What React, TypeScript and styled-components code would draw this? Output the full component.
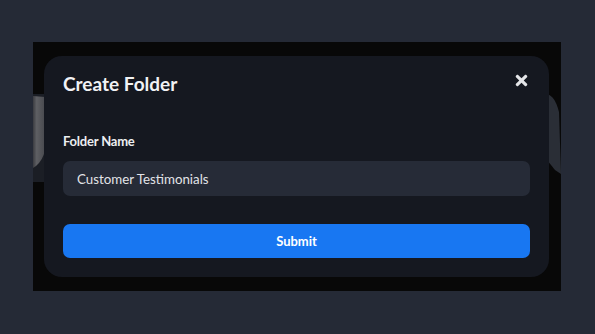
import styled, { createGlobalStyle } from 'styled-components';
import { FaTimes } from 'react-icons/fa';

const GlobalStyle = createGlobalStyle`
  html, body {
    margin: 0;
    padding: 0;
    background: #252a36;
    font-family: Lato, "Open Sans", sans-serif;
  }
`;

const Page = styled.div`
  height: 334px;
  padding: 42px 0 0 33px;
  box-sizing: border-box;
`;

const VideoFrame = styled.div`
  position: relative;
  width: 528px;
  height: 249px;
  padding: 14px 12px 14px 11px;
  box-sizing: border-box;
  background: #080808;
  overflow: hidden;
`;

const Thumbnail = styled.svg`
  position: absolute;
  inset: 0;
  width: 100%;
  height: 100%;
`;

const Modal = styled.div`
  position: relative;
  height: 221px;
  border-radius: 18px;
  background: #151820;
  padding: 15px 19px 0 19px;
  box-sizing: border-box;
  display: flex;
  flex-direction: column;
`;

const Header = styled.div`
  display: flex;
  align-items: center;
  justify-content: space-between;
  height: 24px;
`;

const Title = styled.h2`
  margin: 0;
  color: #f1f2f4;
  font-size: 19px;
  font-weight: 700;
`;

const CloseButton = styled.button`
  border: 0;
  background: none;
  padding: 0;
  margin-top: -6px;
  color: #e4e5e8;
  display: flex;
  cursor: pointer;
`;

const Label = styled.label`
  margin-top: 38px;
  color: #eceef1;
  font-size: 13px;
  font-weight: 700;
  letter-spacing: -0.2px;
`;

const Input = styled.input`
  margin-top: 12px;
  height: 35px;
  border: 0;
  border-radius: 7px;
  background: #262b37;
  color: #e2e4e8;
  font-family: Lato, "Open Sans", sans-serif;
  font-size: 13.3px;
  padding: 0 14px;
  outline: none;
`;

const SubmitButton = styled.button`
  margin-top: 28px;
  height: 34px;
  border: 0;
  border-radius: 7px;
  background: #1877f2;
  color: #ffffff;
  font-family: Lato, "Open Sans", sans-serif;
  font-size: 13px;
  font-weight: 700;
  cursor: pointer;
`;

export default function App() {
  return (
    <>
      <GlobalStyle />
      <Page>
        <VideoFrame>
          <Thumbnail viewBox="0 0 528 249" preserveAspectRatio="none">
            <defs>
              <linearGradient id="lg" x1="0" x2="1" y1="0" y2="0">
                <stop offset="0" stopColor="#3a3b40" />
                <stop offset="0.3" stopColor="#5e5f63" />
                <stop offset="1" stopColor="#48494e" />
              </linearGradient>
            </defs>
            <rect x="0" y="52" width="14" height="88" fill="#1b1e25" />
            <path d="M0 54 L12 55 L12 108 Q10 118 3 124 L0 126 Z" fill="url(#lg)" />
            <path d="M514 52 Q522 54 526 70 L528 132 L522 128 L514 118 Z" fill="#2a2e36" />
          </Thumbnail>
          <Modal>
            <Header>
              <Title>Create Folder</Title>
              <CloseButton aria-label="Close">
                <FaTimes size={17} />
              </CloseButton>
            </Header>
            <Label htmlFor="folder-name">Folder Name</Label>
            <Input id="folder-name" defaultValue="Customer Testimonials" />
            <SubmitButton>Submit</SubmitButton>
          </Modal>
        </VideoFrame>
      </Page>
    </>
  );
}
